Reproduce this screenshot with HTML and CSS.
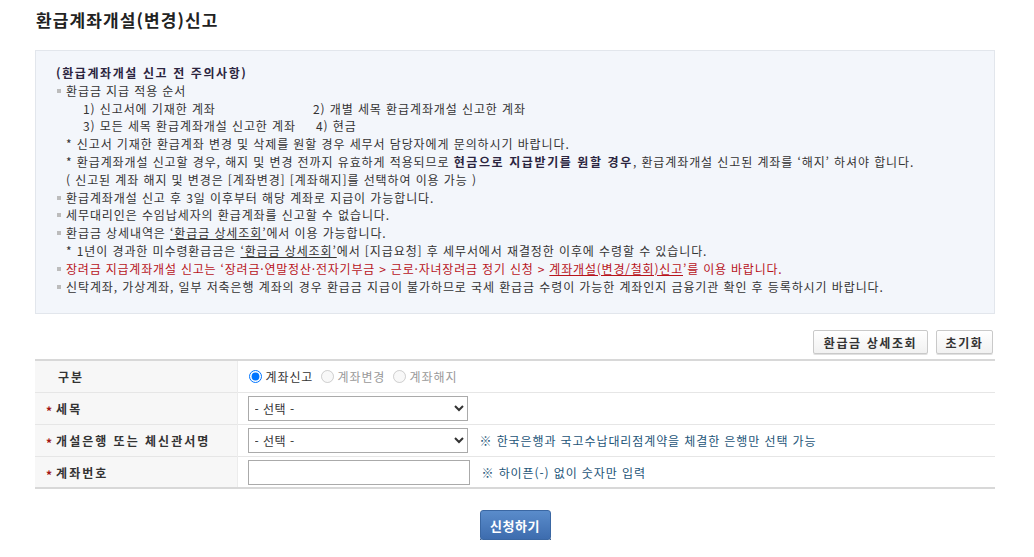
FILE: index.html
```html
<!DOCTYPE html>
<html lang="ko">
<head>
<meta charset="utf-8">
<title>환급계좌개설(변경)신고</title>
<link rel="stylesheet" href="styles.css">
</head>
<body>
<div class="page">
  <h1 class="title">환급계좌개설(변경)신고</h1>

  <div class="notice">
    <p class="notice-head">(환급계좌개설 신고 전 주의사항)</p>
    <p class="bl">환급금 지급 적용 순서</p>
    <div class="order">
      <span class="c1">1) 신고서에 기재한 계좌</span><span>2) 개별 세목 환급계좌개설 신고한 계좌</span>
    </div>
    <div class="order">
      <span class="c1">3) 모든 세목 환급계좌개설 신고한 계좌</span><span class="c2b">4) 현금</span>
    </div>
    <p class="sub">* 신고서 기재한 환급계좌 변경 및 삭제를 원할 경우 세무서 담당자에게 문의하시기 바랍니다.</p>
    <p class="sub">* 환급계좌개설 신고할 경우, 해지 및 변경 전까지 유효하게 적용되므로 <b>현금으로 지급받기를 원할 경우</b>, 환급계좌개설 신고된 계좌를 ‘해지’ 하셔야 합니다.</p>
    <p class="sub">( 신고된 계좌 해지 및 변경은 [계좌변경] [계좌해지]를 선택하여 이용 가능 )</p>
    <p class="bl">환급계좌개설 신고 후 3일 이후부터 해당 계좌로 지급이 가능합니다.</p>
    <p class="bl">세무대리인은 수임납세자의 환급계좌를 신고할 수 없습니다.</p>
    <p class="bl">환급금 상세내역은 <a class="lnk">‘환급금 상세조회’</a>에서 이용 가능합니다.</p>
    <p class="sub">* 1년이 경과한 미수령환급금은 <a class="lnk">‘환급금 상세조회’</a>에서 [지급요청] 후 세무서에서 재결정한 이후에 수령할 수 있습니다.</p>
    <p class="bl red">장려금 지급계좌개설 신고는 ‘장려금·연말정산·전자기부금 &gt; 근로·자녀장려금 정기 신청 &gt; <a class="lnk red">계좌개설(변경/철회)신고</a>’를 이용 바랍니다.</p>
    <p class="bl">신탁계좌, 가상계좌, 일부 저축은행 계좌의 경우 환급금 지급이 불가하므로 국세 환급금 수령이 가능한 계좌인지 금융기관 확인 후 등록하시기 바랍니다.</p>
  </div>

  <div class="toolbar">
    <button class="btn-gray btn-wide">환급금 상세조회</button>
    <button class="btn-gray btn-narrow">초기화</button>
  </div>

  <table class="form">
    <tr>
      <th><span class="plain">구분</span></th>
      <td>
        <label class="radio"><input type="radio" name="k" checked> 계좌신고</label>
        <label class="radio dis"><input type="radio" name="k" disabled> 계좌변경</label>
        <label class="radio dis"><input type="radio" name="k" disabled> 계좌해지</label>
      </td>
    </tr>
    <tr>
      <th><span class="req">*</span>세목</th>
      <td><select class="sel"><option>- 선택 -</option></select></td>
    </tr>
    <tr>
      <th><span class="req">*</span>개설은행 또는 체신관서명</th>
      <td><select class="sel"><option>- 선택 -</option></select><span class="hint">※ 한국은행과 국고수납대리점계약을 체결한 은행만 선택 가능</span></td>
    </tr>
    <tr>
      <th><span class="req">*</span>계좌번호</th>
      <td><input class="inp" type="text"><span class="hint">※ 하이픈(-) 없이 숫자만 입력</span></td>
    </tr>
  </table>

  <div class="submit-row">
    <button class="btn-blue">신청하기</button>
  </div>
</div>
</body>
</html>
```

FILE: styles.css
```css
* { box-sizing: border-box; }
html, body { margin: 0; padding: 0; background: #fff; }
body {
  font-family: "Noto Sans CJK KR", "Noto Sans", sans-serif;
  font-size: 12px;
  color: #333;
  letter-spacing: 0.9px;
}
.page {
  width: 960px;
  margin-left: 35px;
  padding-top: 9px;
}
.title {
  margin: 0 0 0 1px;
  font-size: 17px;
  line-height: 22px;
  font-weight: bold;
  color: #222;
  letter-spacing: 1.1px;
}
.notice {
  margin-top: 19px;
  background: #f3f6fb;
  border: 1px solid #e2e6ec;
  padding: 13px 20px 18px 20px;
  line-height: 17.8px;
  letter-spacing: 0.9px;
}
.notice p { margin: 0; }
.notice-head {
  font-weight: bold;
  color: #2b2540;
  letter-spacing: 1.6px;
}
.notice b { color: #2b2540; letter-spacing: 1.6px; }
.bl {
  position: relative;
  padding-left: 10px;
}
.bl::before {
  content: "";
  position: absolute;
  left: 1px;
  top: 7px;
  width: 4px;
  height: 4px;
  background: #bcbcbc;
}
.sub { padding-left: 10px; }
.order { padding-left: 27px; display: flex; }
.order .c1 { width: 230px; flex-shrink: 0; }
.order .c2b { margin-left: 3px; }
.red { color: #b8141c; letter-spacing: 0.8px; }
.lnk { text-decoration: underline; color: inherit; }

.toolbar {
  display: flex;
  justify-content: flex-end;
  gap: 8px;
  margin-top: 16px;
  padding-right: 2px;
}
.btn-gray {
  height: 24px;
  padding: 0;
  border: 1px solid #c9c9c9;
  border-radius: 2px;
  background: linear-gradient(#ffffff, #f1f1f1);
  font-family: inherit;
  font-size: 12px;
  font-weight: bold;
  color: #333;
  letter-spacing: 1.6px;
  box-shadow: 0 1px 0 #e0e0e0;
}
.btn-wide { width: 115px; }
.btn-narrow { width: 57px; }
.form {
  margin-top: 5px;
  width: 960px;
  border-collapse: collapse;
  border-top: 2px solid #d8d8d8;
  border-bottom: 2px solid #d8d8d8;
}
.form th, .form td {
  height: 32px;
  border-top: 1px solid #e6e6e6;
  padding: 0;
  vertical-align: middle;
}
.form th {
  width: 202px;
  background: #f7f7f7;
  text-align: left;
  padding-left: 11px;
  font-weight: bold;
  color: #333;
  letter-spacing: 2px;
  border-right: 1px solid #ececec;
}
.form td { padding-left: 10px; }
.req {
  display: inline-block;
  color: #a31515;
  margin-right: 4px;
  letter-spacing: 0;
  position: relative;
  top: 2px;
}
.plain { padding-left: 12px; }
.radio {
  display: inline-flex;
  align-items: center;
  margin-right: 2px;
  color: #333;
}
.radio input { margin: 0 4px 0 1px; width: 13px; height: 13px; }
.radio.dis { color: #999; }
.sel {
  width: 220px;
  height: 25px;
  border: 1px solid #aaa;
  border-radius: 0;
  background: #fff;
  font-family: inherit;
  font-size: 12px;
  color: #333;
  padding: 0 2px;
  vertical-align: middle;
  letter-spacing: 0.5px;
}
.inp {
  width: 222px;
  height: 25px;
  border: 1px solid #aaa;
  vertical-align: middle;
  margin: 0;
}
.hint {
  margin-left: 12px;
  color: #1d5578;
  vertical-align: middle;
}
.submit-row {
  display: flex;
  justify-content: center;
  margin-top: 21px;
}
.btn-blue {
  width: 71px;
  height: 30px;
  border: 1px solid #3a67a3;
  border-radius: 3px;
  background: linear-gradient(#5a8ccb, #3d6cae);
  box-shadow: 0 2px 0 #2c4f80;
  color: #fff;
  font-family: inherit;
  font-size: 13px;
  font-weight: bold;
  letter-spacing: 0.5px;
}
```
